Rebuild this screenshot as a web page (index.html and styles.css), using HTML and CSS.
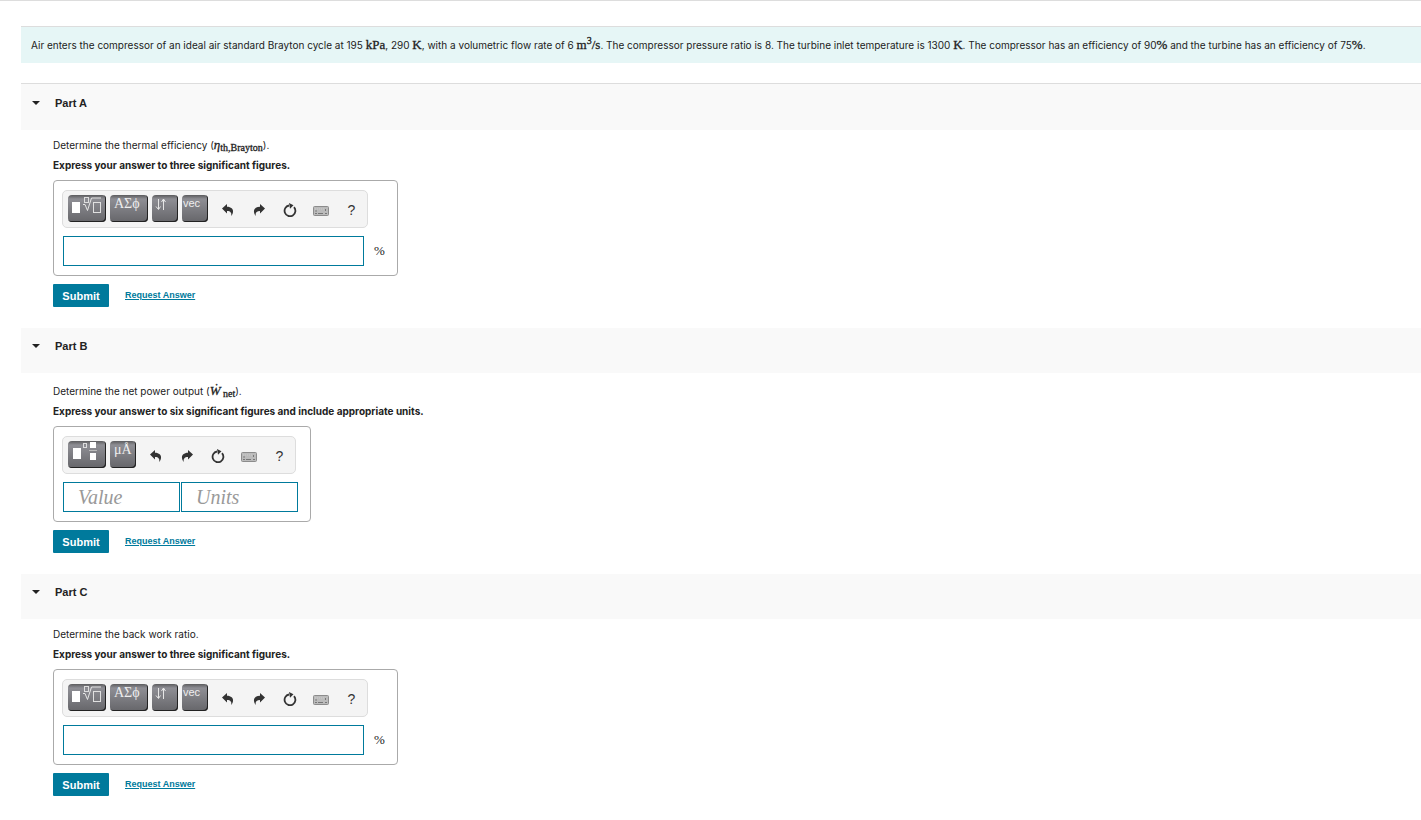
FILE: index.html
```html
<!DOCTYPE html>
<html lang="en">
<head>
    <meta charset="UTF-8">
    <title>Brayton Cycle</title>
    <link rel="stylesheet" href="styles.css">
</head>
<body>
    <!-- shared toolbar icons -->
    <svg class="sprite" aria-hidden="true">
        <symbol id="icon-root" viewBox="0 0 38 27">
            <rect x="4" y="7" width="8" height="11" fill="#fff"/>
            <rect x="16.500" y="2.500" width="4" height="5" fill="none" stroke="#ddd"/>
            <path d="M15 9.500h2l2.500 6 4-12.500H33" fill="none" stroke="#e6e6e6"/>
            <rect x="25.500" y="7.500" width="7" height="10" fill="none" stroke="#e0e0e0"/>
        </symbol>
        <symbol id="icon-fraction" viewBox="0 0 38 27">
            <rect x="5" y="7" width="8" height="11" fill="#fff"/>
            <rect x="15.500" y="2.500" width="3" height="4" fill="none" stroke="#ddd"/>
            <rect x="22" y="1" width="6" height="6" fill="#fff"/>
            <path d="M21 9.500h8" stroke="#bbb"/>
            <rect x="22" y="12" width="6" height="7" fill="#fff"/>
        </symbol>
        <symbol id="icon-arrows" viewBox="0 0 26 27">
            <path d="M6.500 4v10M4 11.500l2.500 3 2-3M11.500 15V4M9.500 7l2-3 2 3" fill="none" stroke="#e6e6e6"/>
        </symbol>
        <symbol id="icon-undo" viewBox="0 0 12 12">
            <path d="M0 4.500L5 0v2.700c4 0 6.500 2.300 6 5.300-.2 1.800-.9 3-1.800 4 .7-3-.6-5-4.200-5V9.500z" fill="#333"/>
        </symbol>
        <symbol id="icon-redo" viewBox="0 0 12 12">
            <path d="M12 4.500L7 0v2.700C3 2.700.5 5 1 8c.2 1.800.9 3 1.800 4-.7-3 .6-5 4.200-5v2.500z" fill="#333"/>
        </symbol>
        <symbol id="icon-reset" viewBox="0 0 14 14">
            <path d="M11 4.200A5.400 5.400 0 1 1 6 2.500" fill="none" stroke="#333" stroke-width="1.800"/>
            <path d="M6 0l4.500 2.300L7 5.800z" fill="#333"/>
        </symbol>
        <symbol id="icon-keyboard" viewBox="0 0 16 10">
            <rect x=".5" y=".5" width="15" height="9" rx="1" fill="#bbb" stroke="#8c8c8c"/>
            <path d="M2 3h1M4 3h1M6 3h1M8 3h1M10 3h1M2 5h1" stroke="#ccc"/>
            <path d="M3 4v2M12.500 3v2" stroke="#777"/>
            <path d="M2 7.500h2M5 7.500h5M12 7.500h2" stroke="#777"/>
        </symbol>
    </svg>

    <main class="page">
        <p class="intro">Air enters the compressor of an ideal air standard Brayton cycle at 195 <span class="math">kPa</span>, 290 <span class="math">K</span>, with a volumetric flow rate of 6 <span class="math">m<sup>3</sup>/s</span>. The compressor pressure ratio is 8. The turbine inlet temperature is 1300 <span class="math">K</span>. The compressor has an efficiency of 90<span class="math">%</span> and the turbine has an efficiency of 75<span class="math">%</span>.</p>

        <section class="part part-first">
            <h2 class="part-header"><span class="caret"></span>Part A</h2>
            <div class="part-body">
                <p class="prompt">Determine the thermal efficiency (<span class="math"><i>η</i><sub>th,Brayton</sub></span>).</p>
                <p class="prompt instructions">Express your answer to three significant figures.</p>
                <div class="answer-box">
                    <div class="toolbar">
                        <button class="tool tool-wide" aria-label="Templates"><svg width="38" height="27"><use href="#icon-root"/></svg></button>
                        <button class="tool tool-wide tool-greek">ΑΣϕ</button>
                        <button class="tool tool-narrow" aria-label="Arrows"><svg width="26" height="27"><use href="#icon-arrows"/></svg></button>
                        <button class="tool tool-narrow tool-vec">vec</button>
                        <div class="actions">
                            <button class="action" aria-label="Undo"><svg width="12" height="12"><use href="#icon-undo"/></svg></button>
                            <button class="action" aria-label="Redo"><svg width="12" height="12"><use href="#icon-redo"/></svg></button>
                            <button class="action" aria-label="Reset"><svg width="14" height="14"><use href="#icon-reset"/></svg></button>
                            <button class="action action-keyboard" aria-label="Keyboard shortcuts"><svg width="16" height="10"><use href="#icon-keyboard"/></svg></button>
                            <button class="action">?</button>
                        </div>
                    </div>
                    <div class="fields">
                        <input class="field field-wide" type="text" id="answer-a" aria-label="Thermal efficiency">
                        <label class="unit" for="answer-a">%</label>
                    </div>
                </div>
                <div class="submit-row">
                    <button class="submit">Submit</button>
                    <a class="request" href="#">Request Answer</a>
                </div>
            </div>
        </section>

        <section class="part">
            <h2 class="part-header"><span class="caret"></span>Part B</h2>
            <div class="part-body">
                <p class="prompt prompt-dot">Determine the net power output (<span class="math"><i>Ẇ</i><sub> net</sub></span>).</p>
                <p class="prompt instructions">Express your answer to six significant figures and include appropriate units.</p>
                <div class="answer-box">
                    <div class="toolbar">
                        <button class="tool tool-wide" aria-label="Templates"><svg width="38" height="27"><use href="#icon-fraction"/></svg></button>
                        <button class="tool tool-narrow tool-greek">μÅ</button>
                        <div class="actions">
                            <button class="action" aria-label="Undo"><svg width="12" height="12"><use href="#icon-undo"/></svg></button>
                            <button class="action" aria-label="Redo"><svg width="12" height="12"><use href="#icon-redo"/></svg></button>
                            <button class="action" aria-label="Reset"><svg width="14" height="14"><use href="#icon-reset"/></svg></button>
                            <button class="action action-keyboard" aria-label="Keyboard shortcuts"><svg width="16" height="10"><use href="#icon-keyboard"/></svg></button>
                            <button class="action">?</button>
                        </div>
                    </div>
                    <div class="fields fields-pair">
                        <input class="field" type="text" placeholder="Value" aria-label="Value">
                        <input class="field" type="text" placeholder="Units" aria-label="Units">
                    </div>
                </div>
                <div class="submit-row">
                    <button class="submit">Submit</button>
                    <a class="request" href="#">Request Answer</a>
                </div>
            </div>
        </section>

        <section class="part">
            <h2 class="part-header"><span class="caret"></span>Part C</h2>
            <div class="part-body">
                <p class="prompt">Determine the back work ratio.</p>
                <p class="prompt instructions">Express your answer to three significant figures.</p>
                <div class="answer-box">
                    <div class="toolbar">
                        <button class="tool tool-wide" aria-label="Templates"><svg width="38" height="27"><use href="#icon-root"/></svg></button>
                        <button class="tool tool-wide tool-greek">ΑΣϕ</button>
                        <button class="tool tool-narrow" aria-label="Arrows"><svg width="26" height="27"><use href="#icon-arrows"/></svg></button>
                        <button class="tool tool-narrow tool-vec">vec</button>
                        <div class="actions">
                            <button class="action" aria-label="Undo"><svg width="12" height="12"><use href="#icon-undo"/></svg></button>
                            <button class="action" aria-label="Redo"><svg width="12" height="12"><use href="#icon-redo"/></svg></button>
                            <button class="action" aria-label="Reset"><svg width="14" height="14"><use href="#icon-reset"/></svg></button>
                            <button class="action action-keyboard" aria-label="Keyboard shortcuts"><svg width="16" height="10"><use href="#icon-keyboard"/></svg></button>
                            <button class="action">?</button>
                        </div>
                    </div>
                    <div class="fields">
                        <input class="field field-wide" type="text" id="answer-c" aria-label="Back work ratio">
                        <label class="unit" for="answer-c">%</label>
                    </div>
                </div>
                <div class="submit-row">
                    <button class="submit">Submit</button>
                    <a class="request" href="#">Request Answer</a>
                </div>
            </div>
        </section>
    </main>
</body>
</html>
```
FILE: styles.css
```css
* {
    box-sizing: border-box;
}
body {
    margin: 0;
    background: #fff;
    color: #222;
    font-family: "Liberation Sans", Arial, sans-serif;
    font-size: 10px;
}
button {
    font-family: inherit;
    cursor: pointer;
}
.sprite {
    display: none;
}
.page {
    border-top: 1px solid #ddd;
    padding: 25px 0 20px 21px;
}
.intro {
    margin: 0 0 20px;
    padding: 8px 10px;
    border-top: 1px solid #ddd;
    background: #e6f6f6;
    font-family: Inter, Arial, sans-serif;
    line-height: 20px;
}
.math {
    font-family: "Liberation Serif", "Times New Roman", serif;
    font-size: 13px;
    line-height: 1;
    -webkit-text-stroke: 0.3px;
}
.math sup,
.math sub {
    font-size: 10px;
    line-height: 1;
}
.math sub {
    vertical-align: -2px;
}

/* Parts */
.part-header {
    display: flex;
    align-items: center;
    gap: 15px;
    height: 45px;
    margin: 0;
    padding: 0 11px 9px;
    background: #f9f9f9;
    font-size: 11px;
    font-weight: bold;
}
.part-first .part-header {
    height: 47px;
    border-top: 1px solid #ddd;
}
.caret {
    border: 4px solid transparent;
    border-top-color: #222;
    border-bottom: 0;
}
.part-body {
    padding: 5px 0 21px 32px;
}
.prompt {
    margin: 0;
    font-family: Inter, Arial, sans-serif;
    line-height: 20px;
}
.prompt-dot {
    padding-top: 3px;
}
.instructions {
    font-weight: bold;
}

/* Answer box */
.answer-box {
    width: fit-content;
    margin: 5px 0 8px;
    padding: 9px 8px;
    border: 1px solid #aaa;
    border-radius: 4px;
}
.toolbar {
    display: flex;
    align-items: center;
    gap: 4px;
    width: fit-content;
    height: 38px;
    padding: 0 0 2px 5px;
    border: 1px solid #ddd;
    border-radius: 5px;
    background: #f4f4f4;
}
.tool {
    display: flex;
    height: 27px;
    padding: 0;
    overflow: hidden;
    border: 0;
    border-radius: 4px;
    background: linear-gradient(#5c5c5e, #8e8e94 15%, #66666a);
    box-shadow: inset -1px -1px 0 #222;
    color: #eee;
}
.tool-wide {
    width: 38px;
}
.tool-narrow {
    width: 26px;
}
.tool-greek {
    padding-left: 4px;
    font-family: "Liberation Serif", "Times New Roman", serif;
    font-size: 14px;
    line-height: 18px;
}
.tool-vec {
    padding-left: 1px;
    font-size: 11px;
    line-height: 16px;
}
.actions {
    display: flex;
}
.action {
    display: flex;
    align-items: center;
    justify-content: center;
    width: 31px;
    height: 27px;
    padding: 4px 0 0;
    border: 0;
    background: none;
    color: #333;
    font-size: 14px;
}
.action-keyboard {
    padding-top: 6px;
}
.fields {
    display: flex;
    align-items: center;
    gap: 10px;
    margin-top: 8px;
    padding: 0 4px 0 1px;
}
.fields-pair {
    gap: 1px;
}
.field {
    width: 117px;
    height: 30px;
    padding: 0 14px;
    border: 1px solid #007a9c;
    background: #fff;
    font-family: "Liberation Serif", "Times New Roman", serif;
    font-size: 20px;
}
.field::placeholder {
    color: #999;
    font-style: italic;
}
.field-wide {
    width: 301px;
}
.unit {
    font-family: "Liberation Serif", "Times New Roman", serif;
    font-size: 13px;
}

/* Submit row */
.submit-row {
    display: flex;
    align-items: center;
    gap: 16px;
}
.submit {
    width: 56px;
    height: 23px;
    padding: 0;
    border: 0;
    border-radius: 1px;
    background: #007a9c;
    color: #fff;
    font-size: 11px;
    font-weight: bold;
}
.request {
    padding-bottom: 2px;
    color: #007a9c;
    font-size: 9px;
    font-weight: bold;
}
```
